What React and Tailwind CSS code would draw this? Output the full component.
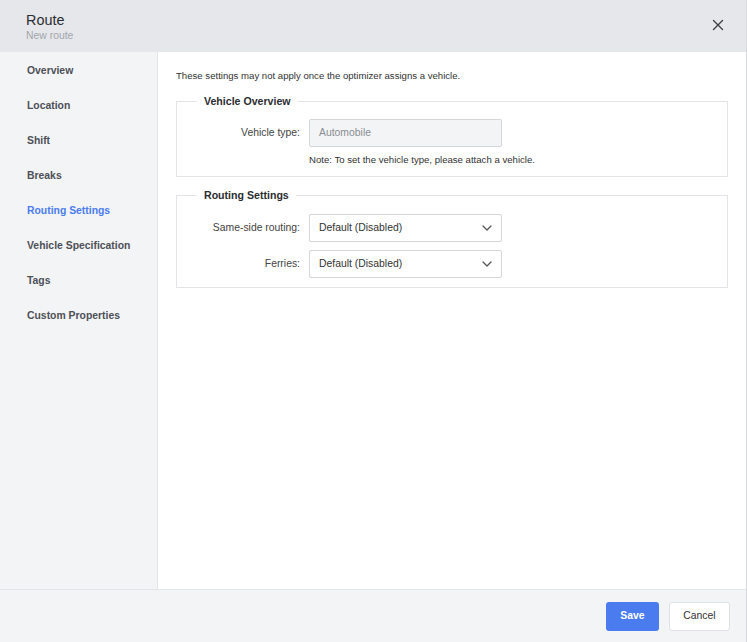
import React from "react";

const font = { fontFamily: '"Liberation Sans", Arial, sans-serif' };

const navItems = [
  "Overview",
  "Location",
  "Shift",
  "Breaks",
  "Routing Settings",
  "Vehicle Specification",
  "Tags",
  "Custom Properties",
];

function Chevron() {
  return (
    <svg width="10" height="6" viewBox="0 0 10 6" fill="none">
      <polyline points="1,1 5,5 9,1" stroke="#555" strokeWidth="1.3" strokeLinecap="round" strokeLinejoin="round" />
    </svg>
  );
}

function Select({ value }) {
  return (
    <div className="w-[193px] h-[28px] border border-[#d4d6da] bg-white rounded-[2px] flex items-center justify-between pl-[9px] pr-[9px] text-[10.4px] text-[#333]">
      <span>{value}</span>
      <Chevron />
    </div>
  );
}

export default function App() {
  return (
    <div className="w-[747px] h-[642px] flex flex-col border-r border-[#d9dadd] bg-white" style={font}>
      <div className="h-[52px] shrink-0 bg-[#e5e7eb] flex items-center justify-between pl-[26px] pr-[22px]">
        <div className="flex flex-col mt-[2px]">
          <span className="text-[14.4px] leading-[17px] text-[#2b2d31]">Route</span>
          <span className="text-[10.4px] leading-[13px] text-[#a3a6ab]">New route</span>
        </div>
        <svg width="12" height="12" viewBox="0 0 12 12" fill="none" className="-mt-[2px]">
          <path d="M1.5 1.5 L10.5 10.5 M10.5 1.5 L1.5 10.5" stroke="#3f4146" strokeWidth="1.4" strokeLinecap="round" />
        </svg>
      </div>
      <div className="flex flex-1 min-h-0">
        <div className="w-[158px] shrink-0 bg-[#f3f4f6] border-r border-[#e4e5e8] flex flex-col pt-[1px]">
          {navItems.map((item) => (
            <div
              key={item}
              className={`h-[35px] flex items-center pl-[27px] text-[10.4px] font-bold ${
                item === "Routing Settings" ? "text-[#4a7cf0]" : "text-[#4d5057]"
              }`}
            >
              {item}
            </div>
          ))}
        </div>
        <div className="flex-1 pl-[18px] pr-[18px]">
          <p className="pt-[18px] text-[9.6px] leading-[12px] text-[#333]">
            These settings may not apply once the optimizer assigns a vehicle.
          </p>
          <fieldset className="mt-[12px] border border-[#e3e4e7] px-[20px] pb-[10px]">
            <legend className="px-[7px] text-[10.6px] leading-[14px] font-bold text-[#2b2d31]">Vehicle Overview</legend>
            <div className="mt-[11px] flex items-center">
              <div className="w-[103px] text-right text-[10.4px] text-[#444]">Vehicle type:</div>
              <div className="ml-[9px] w-[193px] h-[28px] border border-[#d4d6da] bg-[#f3f4f6] rounded-[2px] flex items-center pl-[9px] text-[10.4px] text-[#8a8d92]">
                Automobile
              </div>
            </div>
            <div className="mt-[7px] ml-[112px] text-[9.6px] leading-[12px] text-[#333]">
              Note: To set the vehicle type, please attach a vehicle.
            </div>
          </fieldset>
          <fieldset className="mt-[11px] border border-[#e3e4e7] px-[20px] pb-[9px]">
            <legend className="px-[7px] text-[10.6px] leading-[14px] font-bold text-[#2b2d31]">Routing Settings</legend>
            <div className="mt-[12px] flex items-center">
              <div className="w-[103px] text-right text-[10.4px] text-[#444]">Same-side routing:</div>
              <div className="ml-[9px]">
                <Select value="Default (Disabled)" />
              </div>
            </div>
            <div className="mt-[8px] flex items-center">
              <div className="w-[103px] text-right text-[10.4px] text-[#444]">Ferries:</div>
              <div className="ml-[9px]">
                <Select value="Default (Disabled)" />
              </div>
            </div>
          </fieldset>
        </div>
      </div>
      <div className="h-[53px] shrink-0 bg-[#f3f4f6] border-t border-[#e4e5e8] flex items-center justify-end gap-[10px] pr-[16px]">
        <button className="w-[53px] h-[29px] rounded-[3px] bg-[#4a7cf0] text-white text-[10.4px] font-bold">Save</button>
        <button className="w-[61px] h-[29px] rounded-[3px] bg-white border border-[#e0e1e4] text-[#333] text-[10.4px]">Cancel</button>
      </div>
    </div>
  );
}
